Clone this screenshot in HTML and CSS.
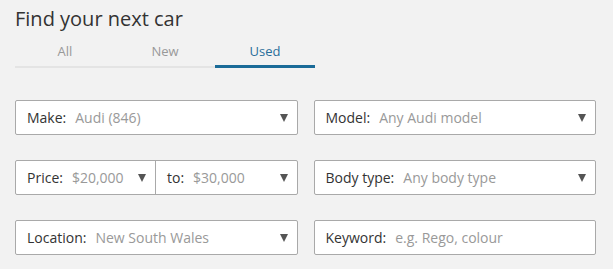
FILE: index.html
```html
<!DOCTYPE html>
<html lang="en">
<head>
  <meta charset="UTF-8" />
  <title>Find your next car</title>
  <link rel="stylesheet" href="styles.css">
</head>
<body>

  <div class="finder">
    <h2>Find your next car</h2>

    <div class="tabs">
      <a href="#" class="tab">All</a>
      <a href="#" class="tab">New</a>
      <a href="#" class="tab active">Used</a>
    </div>

    <div class="fields">
      <div class="field">
        <span class="label">Make:</span>
        <span class="value">Audi (846)</span>
        <span class="arrow"></span>
      </div>
      <div class="field">
        <span class="label">Model:</span>
        <span class="value">Any Audi model</span>
        <span class="arrow"></span>
      </div>

      <div class="field split">
        <div class="part">
          <span class="label">Price:</span>
          <span class="value">$20,000</span>
          <span class="arrow"></span>
        </div>
        <div class="part">
          <span class="label">to:</span>
          <span class="value">$30,000</span>
          <span class="arrow"></span>
        </div>
      </div>
      <div class="field">
        <span class="label">Body type:</span>
        <span class="value">Any body type</span>
        <span class="arrow"></span>
      </div>

      <div class="field">
        <span class="label">Location:</span>
        <span class="value">New South Wales</span>
        <span class="arrow"></span>
      </div>
      <div class="field">
        <span class="label">Keyword:</span>
        <input type="text" class="value" placeholder="e.g. Rego, colour" />
      </div>
    </div>
  </div>

</body>
</html>
```

FILE: styles.css
```css
* { margin: 0; padding: 0; box-sizing: border-box; font-family: 'Open Sans', sans-serif; }
body { background: #f2f2f2; color: #333; }

.finder { padding: 5px 17px 0 15px; }
.finder h2 { font-size: 20px; font-weight: normal; color: #333; line-height: 27px; }

.tabs { display: flex; margin-top: 10px; border-bottom: 2px solid #e4e4e4; width: 300px; }
.tab {
  width: 100px; text-align: center; font-size: 13px; color: #999; text-decoration: none;
  padding-bottom: 5px; margin-bottom: -2px; border-bottom: 3px solid transparent;
}
.tab.active { color: #2a6f9a; border-bottom-color: #1a6b98; }

.fields {
  display: grid; grid-template-columns: 1fr 1fr; column-gap: 16px; row-gap: 25px;
  margin-top: 32px;
}
.field {
  height: 35px; background: white; border: 1px solid #a9a9a9; border-radius: 2px;
  display: flex; align-items: center; padding: 0 9px 0 11px; font-size: 14px;
}
.label { color: #333; margin-right: 9px; }
.value { color: #999; flex: 1; white-space: nowrap; }
.arrow {
  width: 0; height: 0; border-left: 4.5px solid transparent; border-right: 4.5px solid transparent;
  border-top: 8px solid #555;
}

input.value {
  border: none; outline: none; font-size: 14px; background: transparent; color: #333;
  min-width: 0;
}
input.value::placeholder { color: #999; }

.field.split { padding: 0; }
.part { flex: 1; display: flex; align-items: center; height: 100%; padding: 0 9px 0 11px; }
.part:first-child { flex: 0 0 140px; border-right: 1px solid #a9a9a9; }
```
